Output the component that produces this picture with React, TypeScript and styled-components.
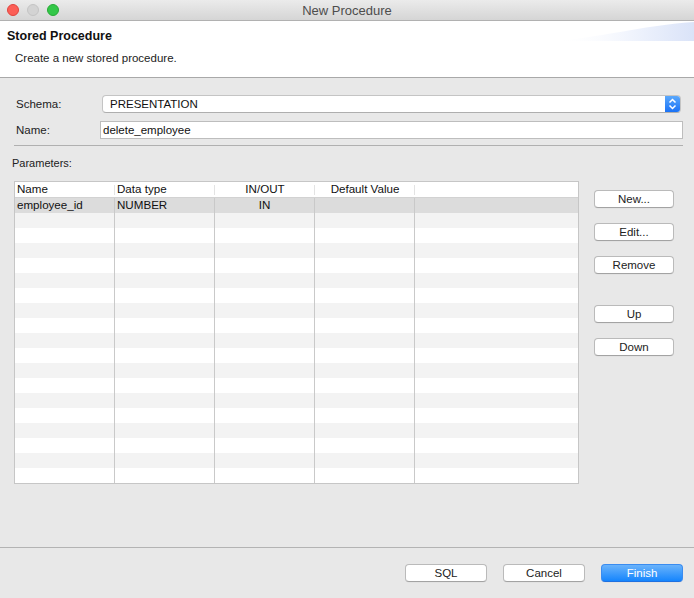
import React from "react";
import styled, { createGlobalStyle } from "styled-components";

const Global = createGlobalStyle`
  html, body { margin: 0; padding: 0; background: #e8e8e8; }
  body { font-family: "Liberation Sans", Arial, sans-serif; -webkit-font-smoothing: antialiased; }
  * { box-sizing: border-box; }
`;

const Window = styled.div`
  width: 694px;
  height: 598px;
  display: flex;
  flex-direction: column;
  background: #e8e8e8;
  overflow: hidden;
`;

const TitleBar = styled.div`
  position: relative;
  height: 21px;
  flex: none;
  display: flex;
  align-items: center;
  justify-content: center;
  background: linear-gradient(#ebebeb, #d5d5d5);
  border-bottom: 1px solid #b1b1b1;
`;

const Lights = styled.div`
  position: absolute;
  left: 7px;
  top: 4px;
  display: flex;
  gap: 8px;
`;

const Light = styled.span<{ $fill: string; $edge: string }>`
  width: 12px;
  height: 12px;
  border-radius: 50%;
  background: ${(p) => p.$fill};
  border: 1px solid ${(p) => p.$edge};
`;

const WindowTitle = styled.div`
  font-size: 13px;
  color: #4d4d4d;
  line-height: 16px;
  margin-top: 1px;
`;

const Header = styled.div`
  position: relative;
  flex: none;
  height: 57px;
  background: #ffffff;
  border-bottom: 1px solid #a9a9a9;
  padding: 7px 8px 0 7px;
  overflow: hidden;
`;

const Swoosh = styled.svg`
  position: absolute;
  right: 0;
  top: 0;
`;

const HeaderTitle = styled.div`
  font-size: 12.5px;
  font-weight: bold;
  color: #111;
  line-height: 16px;
`;

const HeaderDesc = styled.div`
  font-size: 11.5px;
  color: #222;
  line-height: 14px;
  margin-top: 7px;
  padding-left: 8px;
`;

const Body = styled.div`
  flex: 1;
  display: flex;
  flex-direction: column;
  padding: 17px 11px 0 12px;
`;

const Form = styled.div`
  display: grid;
  grid-template-columns: 84px 1fr;
  row-gap: 8px;
  padding-left: 4px;
  align-items: center;
`;

const Label = styled.label`
  font-size: 11.5px;
  color: #222;
`;

const Combo = styled.div`
  margin: 0 2px;
  height: 18px;
  display: flex;
  align-items: stretch;
  background: #fff;
  border: 1px solid #c4c4c4;
  border-bottom-color: #aeaeae;
  border-radius: 4px;
  overflow: hidden;
`;

const ComboText = styled.div`
  flex: 1;
  font-size: 11.5px;
  color: #111;
  padding-left: 7px;
  line-height: 16px;
`;

const Stepper = styled.div`
  width: 15px;
  display: flex;
  align-items: center;
  justify-content: center;
  background: linear-gradient(#5aa8fc, #1a72f6);
`;

const TextInput = styled.div`
  height: 18px;
  background: #fff;
  border: 1px solid #bdbdbd;
  font-size: 11.5px;
  color: #111;
  padding-left: 2px;
  line-height: 16px;
`;

const Separator = styled.div`
  margin: 6px 0 0 2px;
  height: 1px;
  background: #b0b0b0;
`;

const SectionLabel = styled.div`
  font-size: 11px;
  color: #222;
  line-height: 14px;
  margin-top: 10px;
`;

const TableArea = styled.div`
  display: flex;
  gap: 15px;
  margin: 11px 0 0 2px;
`;

const Table = styled.div`
  width: 565px;
  height: 303px;
  flex: none;
  background: #fff;
  border: 1px solid #c6c6c6;
  display: flex;
  flex-direction: column;
`;

const Row = styled.div<{ $kind: "head" | "sel" | "odd" | "even" }>`
  display: grid;
  grid-template-columns: 100px 100px 100px 100px 1fr;
  height: ${(p) => (p.$kind === "head" ? "16px" : "15px")};
  background: ${(p) =>
    p.$kind === "sel" ? "#dcdcdc" : p.$kind === "odd" ? "#f3f3f3" : "#ffffff"};
  border-bottom: ${(p) => (p.$kind === "head" ? "1px solid #d2d2d2" : "none")};
`;

const Cell = styled.div<{ $center?: boolean; $head?: boolean; $last?: boolean }>`
  font-size: 11.6px;
  color: #111;
  line-height: 13px;
  padding: 0 2px;
  text-align: ${(p) => (p.$center ? "center" : "left")};
  white-space: nowrap;
  overflow: hidden;
  position: relative;
  border-right: ${(p) => (p.$last || p.$head ? "none" : "1px solid #c9c9c9")};
  ${(p) =>
    p.$head && !p.$last
      ? `&::after { content: ""; position: absolute; right: 0; top: 3px; bottom: 2px; width: 1px; background: #e3e3e3; }`
      : ""}
`;

const SideButtons = styled.div`
  display: flex;
  flex-direction: column;
  padding-top: 9px;
`;

const PushButton = styled.button<{ $w: number; $gap?: number; $primary?: boolean }>`
  width: ${(p) => p.$w}px;
  height: 18px;
  margin-top: ${(p) => p.$gap ?? 0}px;
  padding: 0;
  font-family: "Liberation Sans", Arial, sans-serif;
  font-size: 11.5px;
  line-height: 16px;
  color: ${(p) => (p.$primary ? "#fff" : "#222")};
  background: ${(p) =>
    p.$primary ? "linear-gradient(#6ab3fb, #1585fd)" : "#ffffff"};
  border: 1px solid ${(p) => (p.$primary ? "#3a8cf0" : "#bababa")};
  border-bottom-color: ${(p) => (p.$primary ? "#2070e0" : "#a3a3a3")};
  border-radius: 4px;
  box-shadow: 0 0.5px 0 rgba(0, 0, 0, 0.05);
`;

const Footer = styled.div`
  flex: none;
  height: 51px;
  border-top: 1px solid #b3b3b3;
  display: flex;
  justify-content: flex-end;
  gap: 16px;
  padding: 16px 11px 0 0;
`;

type Param = { name: string; type: string; dir: string; def: string };
const params: Param[] = [{ name: "employee_id", type: "NUMBER", dir: "IN", def: "" }];
const ROWS = 19;

export default function App() {
  const rows = Array.from({ length: ROWS }, (_, i) => params[i]);
  return (
    <>
      <Global />
      <Window>
        <TitleBar>
          <Lights>
            <Light $fill="#fc5f57" $edge="#e0443e" />
            <Light $fill="#d3d3d3" $edge="#c4c4c4" />
            <Light $fill="#33c748" $edge="#27aa35" />
          </Lights>
          <WindowTitle>New Procedure</WindowTitle>
        </TitleBar>
        <Header>
          <Swoosh width="140" height="21" viewBox="0 0 140 21">
            <defs>
              <linearGradient id="sw" x1="0" y1="0" x2="1" y2="0">
                <stop offset="0" stopColor="#ffffff" stopOpacity="0" />
                <stop offset="0.55" stopColor="#f0f4fd" />
                <stop offset="1" stopColor="#dae3f8" />
              </linearGradient>
            </defs>
            <path d="M0 20 C45 17 85 5 140 1 L140 20 Z" fill="url(#sw)" />
          </Swoosh>
          <HeaderTitle>Stored Procedure</HeaderTitle>
          <HeaderDesc>Create a new stored procedure.</HeaderDesc>
        </Header>
        <Body>
          <Form>
            <Label>Schema:</Label>
            <Combo>
              <ComboText>PRESENTATION</ComboText>
              <Stepper>
                <svg width="9" height="12" viewBox="0 0 9 12">
                  <path d="M1.5 4.5 L4.5 1.5 L7.5 4.5 M1.5 7.5 L4.5 10.5 L7.5 7.5" stroke="#fff" strokeWidth="1.5" fill="none" />
                </svg>
              </Stepper>
            </Combo>
            <Label>Name:</Label>
            <TextInput>delete_employee</TextInput>
          </Form>
          <Separator />
          <SectionLabel>Parameters:</SectionLabel>
          <TableArea>
            <Table>
              <Row $kind="head">
                <Cell $head>Name</Cell>
                <Cell $head>Data type</Cell>
                <Cell $head $center>IN/OUT</Cell>
                <Cell $head $center>Default Value</Cell>
                <Cell $head $last />
              </Row>
              {rows.map((p, i) => (
                <Row key={i} $kind={i === 0 ? "sel" : i % 2 === 1 ? "odd" : "even"}>
                  <Cell>{p?.name}</Cell>
                  <Cell>{p?.type}</Cell>
                  <Cell $center>{p?.dir}</Cell>
                  <Cell $center>{p?.def}</Cell>
                  <Cell $last />
                </Row>
              ))}
            </Table>
            <SideButtons>
              <PushButton $w={80}>New...</PushButton>
              <PushButton $w={80} $gap={15}>Edit...</PushButton>
              <PushButton $w={80} $gap={15}>Remove</PushButton>
              <PushButton $w={80} $gap={31}>Up</PushButton>
              <PushButton $w={80} $gap={15}>Down</PushButton>
            </SideButtons>
          </TableArea>
        </Body>
        <Footer>
          <PushButton $w={82}>SQL</PushButton>
          <PushButton $w={82}>Cancel</PushButton>
          <PushButton $w={82} $primary>Finish</PushButton>
        </Footer>
      </Window>
    </>
  );
}
